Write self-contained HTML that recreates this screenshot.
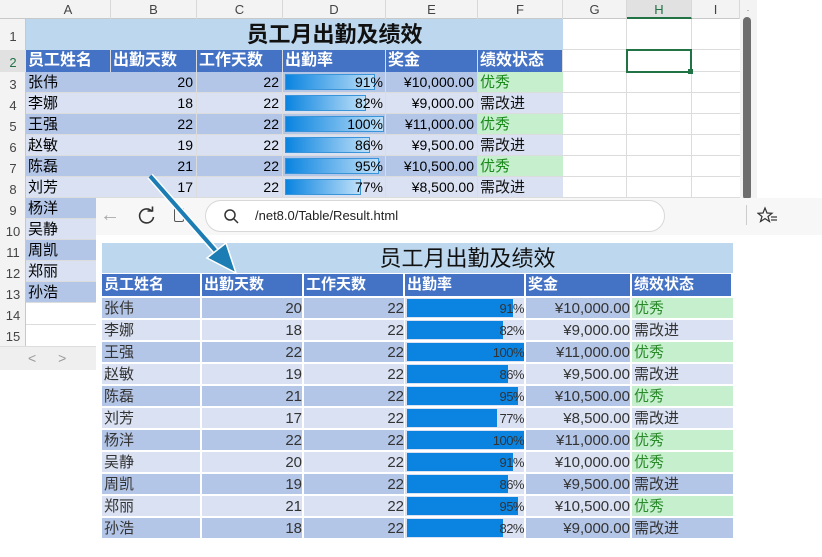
<!DOCTYPE html>
<html><head><meta charset="utf-8">
<style>
*{margin:0;padding:0;box-sizing:border-box}
body{width:822px;height:557px;overflow:hidden;background:#fff;position:relative;font-family:"Liberation Sans","Noto Sans CJK SC",sans-serif;}
.a{position:absolute;white-space:nowrap;overflow:hidden}
.cjk{font-family:"Noto Sans CJK SC","WenQuanYi Zen Hei",sans-serif}
</style></head><body>
<div id="root"></div>
<svg class="a" style="left:0;top:0;overflow:visible;z-index:50" width="822" height="557">
<line x1="150" y1="176" x2="222" y2="258" stroke="#fff" stroke-width="7"/>
<line x1="150" y1="176" x2="222" y2="258" stroke="#1b7db3" stroke-width="4"/>
<polygon points="236,273 207,258 226,243" fill="#1b7db3" stroke="#fff" stroke-width="1.5"/>
</svg>
<script>
var R=document.getElementById('root'),h='';
function d(x,y,w,hh,st,t){h+='<div class="a" style="left:'+x+'px;top:'+y+'px;width:'+w+'px;height:'+hh+'px;'+(st||'')+'">'+(t||'')+'</div>';}
var data=[["张伟",20,22,91,"¥10,000.00",1],["李娜",18,22,82,"¥9,000.00",0],["王强",22,22,100,"¥11,000.00",1],["赵敏",19,22,86,"¥9,500.00",0],["陈磊",21,22,95,"¥10,500.00",1],["刘芳",17,22,77,"¥8,500.00",0],["杨洋",22,22,100,"¥11,000.00",1],["吴静",20,22,91,"¥10,000.00",1],["周凯",19,22,86,"¥9,500.00",0],["郑丽",21,22,95,"¥10,500.00",1],["孙浩",18,22,82,"¥9,000.00",0]];
// Excel
d(0,0,757,19,'background:#f3f3f3;border-bottom:1px solid #c8c8c8');
d(0,19,26,330,'background:#f3f3f3;border-right:1px solid #c8c8c8');
var cx=[26,111,197,283,386,478,563,627,692,740],cl="ABCDEFGHI";
for(var i=0;i<9;i++){d(cx[i],0,cx[i+1]-cx[i],19,'text-align:center;font-size:13px;line-height:19px;color:'+(i==7?'#217346;background:#e1e1e1;border-bottom:2px solid #217346':'#444')+';border-right:1px solid #d8d8d8',cl[i]);}
var ry=[19,50,72];for(var i=3;i<=16;i++)ry.push(72+(i-2)*21);
for(var i=0;i<15;i++){d(0,ry[i],26,ry[i+1]-ry[i],'text-align:center;font-size:13px;color:#444;line-height:'+(ry[i+1]-ry[i]+4)+'px;'+(i==1?'color:#217346;background:#e1e1e1':''),i+1);
 d(26,ry[i+1]-1,714,1,'background:#dcdcdc');}
for(var i=1;i<9;i++)d(cx[i]-1,19,1,327,'background:#dcdcdc');
d(26,19,537,31,'background:#bdd7ee;text-align:center;font-size:22px;font-weight:bold;line-height:31px;color:#111;text-indent:80px','员工月出勤及绩效');
var hd=["员工姓名","出勤天数","工作天数","出勤率","奖金","绩效状态"];
for(var i=0;i<6;i++)d(cx[i],50,cx[i+1]-cx[i]-1,22,'background:#4472c4;color:#fff;font-weight:bold;font-size:16px;line-height:22px;padding-left:2px',hd[i]);
for(var r=0;r<11;r++){var y=ry[r+2],H=(r<11)?21:21,bg=r%2?'#d9e1f2':'#b4c6e7',o=data[r];
 d(26,y,85,H-1,'background:'+bg+';font-size:15px;line-height:21px;padding-left:2px',o[0]);
 if(r<6){
 d(111,y,85,H-1,'background:'+bg+';font-size:14px;line-height:21px;text-align:right;padding-right:3px',o[1]);
 d(197,y,85,H-1,'background:'+bg+';font-size:14px;line-height:21px;text-align:right;padding-right:3px',o[2]);
 d(283,y,102,H-1,'background:'+bg);
 d(285,y+2,99*o[3]/100,H-5,'background:linear-gradient(90deg,#0a84e0,#bfe0f8);border:1px solid #3a95d8');
 d(283,y,102,H-1,'font-size:14px;line-height:21px;text-align:right;padding-right:2px',o[3]+'%');
 d(386,y,91,H-1,'background:'+bg+';font-size:14px;line-height:21px;text-align:right;padding-right:3px',o[4]);
 d(478,y,85,H-1,'background:'+(o[5]?'#c6efce':bg)+';font-size:15px;line-height:21px;padding-left:2px;color:'+(o[5]?'#1a8a1a':'#111'),o[5]?'优秀':'需改进');}
}
d(26,304,714,42,'background:#fff');d(26,324,714,1,'background:#dcdcdc');d(0,304,26,42,'background:#f3f3f3;border-right:1px solid #c8c8c8');
d(0,304,26,21,'text-align:center;font-size:13px;color:#444;line-height:24px',14);d(0,325,26,21,'text-align:center;font-size:13px;color:#444;line-height:24px',15);
d(0,346,100,24,'background:#efefef;border-top:1px solid #ddd;color:#999;font-size:14px;line-height:22px;padding-left:28px;word-spacing:18px','&lt; &gt;');
d(626,49,66,24,'border:2px solid #217346');d(688,69,5,5,'background:#217346');
d(740,0,17,200,'background:#f3f3f3');d(743,17,8,183,'background:#6e6e6e;border-radius:4px');
d(741,3,14,8,'','<svg width="14" height="8"><polygon points="3,7 7,2 11,7" fill="#666"/></svg>');
// Browser
d(96,198,726,37,'background:#f7f7f7');
d(100,205,25,22,'color:#aaa;font-size:20px;line-height:20px','&#8592;');
d(136,205,22,22,'','<svg width="22" height="22"><path d="M16 6.5A7 7 0 1 0 17.5 12" fill="none" stroke="#333" stroke-width="1.6"/><polyline points="11.5,6 16.5,6 16.5,1.5" fill="none" stroke="#333" stroke-width="1.6"/></svg>');
d(174,208,10,14,'border:1.5px solid #555;border-radius:2px');
d(205,200,460,32,'background:#fff;border:1px solid #d8d8d8;border-radius:16px');
d(222,207,20,20,'','<svg width="20" height="20"><circle cx="8" cy="8" r="5" fill="none" stroke="#333" stroke-width="1.5"/><line x1="12" y1="12" x2="16" y2="16" stroke="#333" stroke-width="1.5"/></svg>');
d(255,206,200,20,'font-size:13px;line-height:20px;color:#222','/net8.0/Table/Result.html');
d(746,205,1,20,'background:#ccc');
d(757,206,22,22,'','<svg width="22" height="22"><polygon points="8,2 10,7 15,7.3 11,10.5 12.5,15.5 8,12.6 3.5,15.5 5,10.5 1,7.3 6,7" fill="none" stroke="#333" stroke-width="1.2"/><line x1="14" y1="11" x2="20" y2="11" stroke="#333" stroke-width="1.2"/><line x1="14" y1="14" x2="20" y2="14" stroke="#333" stroke-width="1.2"/></svg>');
d(96,235,726,322,'background:#fff');
var bx=[102,202,304,405,526,632,733];
d(102,243,631,30,'background:#bdd7ee;text-align:center;font-size:22px;line-height:32px;color:#111;text-indent:100px','员工月出勤及绩效');
for(var i=0;i<6;i++)d(bx[i],274,bx[i+1]-bx[i]-2,22,'background:#4472c4;color:#fff;font-weight:bold;font-size:15px;line-height:22px;padding-left:2px',hd[i]);
for(var r=0;r<11;r++){var y=298+r*22,bg=r%2?'#d9e1f2':'#b4c6e7',o=data[r],H=20;
 d(102,y,98,H,'background:'+bg+';font-size:15px;line-height:21px;padding-left:2px;color:#333',o[0]);
 d(202,y,100,H,'background:'+bg+';font-size:15px;line-height:21px;text-align:right;color:#333',o[1]);
 d(304,y,100,H,'background:'+bg+';font-size:15px;line-height:21px;text-align:right;color:#333',o[2]);
 d(405,y,119,H,'background:#d9e1f2');
 d(407,y+1,117*o[3]/100,H-2,'background:#0a84e0');
 d(405,y,119,H,'font-size:13px;line-height:21px;text-align:right;color:#333;letter-spacing:-0.5px',o[3]+'%');
 d(526,y,104,H,'background:'+bg+';font-size:15px;line-height:21px;text-align:right;color:#333',o[4]);
 d(632,y,101,H,'background:'+(o[5]?'#c6efce':bg)+';font-size:15px;line-height:21px;padding-left:2px;color:'+(o[5]?'#2a8a2a':'#333'),o[5]?'优秀':'需改进');
}
R.innerHTML=h;
</script>
</body></html>
